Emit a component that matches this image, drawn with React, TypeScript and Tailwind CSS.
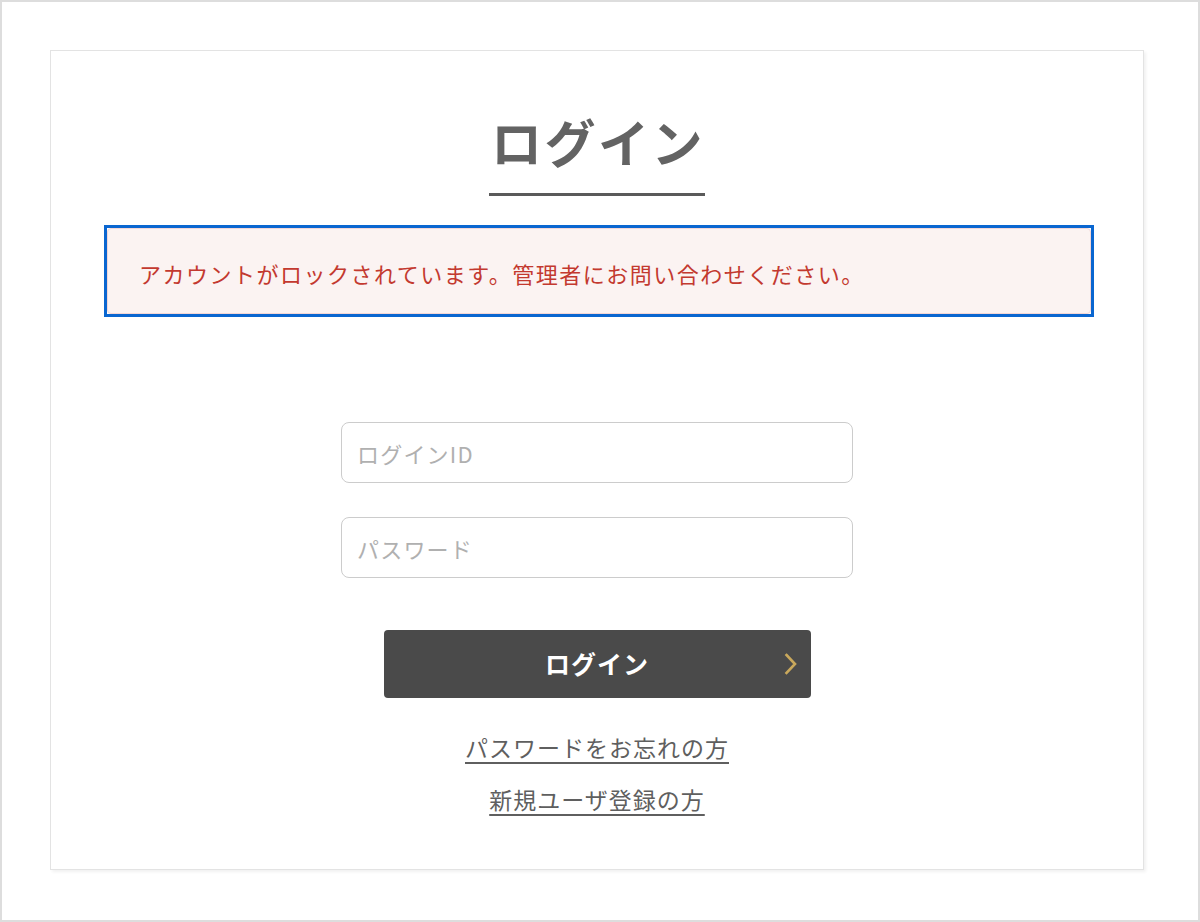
import React from "react";

const font = { fontFamily: '"Noto Sans CJK JP", "Noto Sans", sans-serif' };

export default function App() {
  return (
    <div className="w-[1200px] h-[922px] border-2 border-[#dddddd] bg-white pt-[48px] pl-[48px]" style={font}>
      <div className="w-[1094px] h-[820px] border border-[#e3e3e3] bg-white shadow-[2px_2px_3px_rgba(0,0,0,0.06)] flex flex-col">
        <div className="flex justify-center pt-[54px]">
          <div className="flex flex-col items-center">
            <h1 className="text-[51px] leading-[72px] font-bold text-[#636363] tracking-[2.5px] pl-[2px]">ログイン</h1>
            <div className="w-[216px] h-[3px] bg-[#5a5a5a] mt-[16px]" />
          </div>
        </div>
        <div className="ml-[53px] mt-[29px] w-[990px] h-[92px] border-[3px] border-[#0a66d0] bg-white">
          <div className="w-full h-full rounded-[4px] border border-[#f3d6d6] bg-[#fbf3f2] flex items-center pl-[31px] pt-[4px]">
            <p className="text-[22px] tracking-[1.5px] text-[#c3392f]">
              アカウントがロックされています。管理者にお問い合わせください。
            </p>
          </div>
        </div>
        <div className="flex flex-col items-center mt-[105px]">
          <input
            className="w-[512px] h-[61px] rounded-[8px] border border-[#cccccc] px-[15px] text-[22px] tracking-[1.2px] text-[#333] placeholder:text-[#b0b0b0] outline-none"
            placeholder="ログインID"
            style={font}
          />
          <input
            className="mt-[34px] w-[512px] h-[61px] rounded-[8px] border border-[#cccccc] px-[15px] text-[22px] tracking-[1.2px] text-[#333] placeholder:text-[#b0b0b0] outline-none"
            placeholder="パスワード"
            style={font}
          />
          <button
            className="relative mt-[52px] w-[427px] h-[68px] rounded-[4px] bg-[#4a4a4a] flex items-center justify-center text-white text-[25px] font-bold tracking-[1px]"
            style={font}
          >
            ログイン
            <svg className="absolute right-[13px] top-1/2 -translate-y-1/2" width="14" height="24" viewBox="0 0 14 24" fill="none">
              <path d="M2.5 3 L11 12 L2.5 21" stroke="#c9a85c" strokeWidth="2.6" strokeLinecap="square" />
            </svg>
          </button>
          <a className="mt-[34px] text-[23px] leading-[30px] tracking-[1px] text-[#5f5f5f] underline underline-offset-[5px] decoration-[1.5px] cursor-pointer">
            パスワードをお忘れの方
          </a>
          <a className="mt-[22px] text-[23px] leading-[30px] tracking-[1px] text-[#5f5f5f] underline underline-offset-[5px] decoration-[1.5px] cursor-pointer">
            新規ユーザ登録の方
          </a>
        </div>
      </div>
    </div>
  );
}
